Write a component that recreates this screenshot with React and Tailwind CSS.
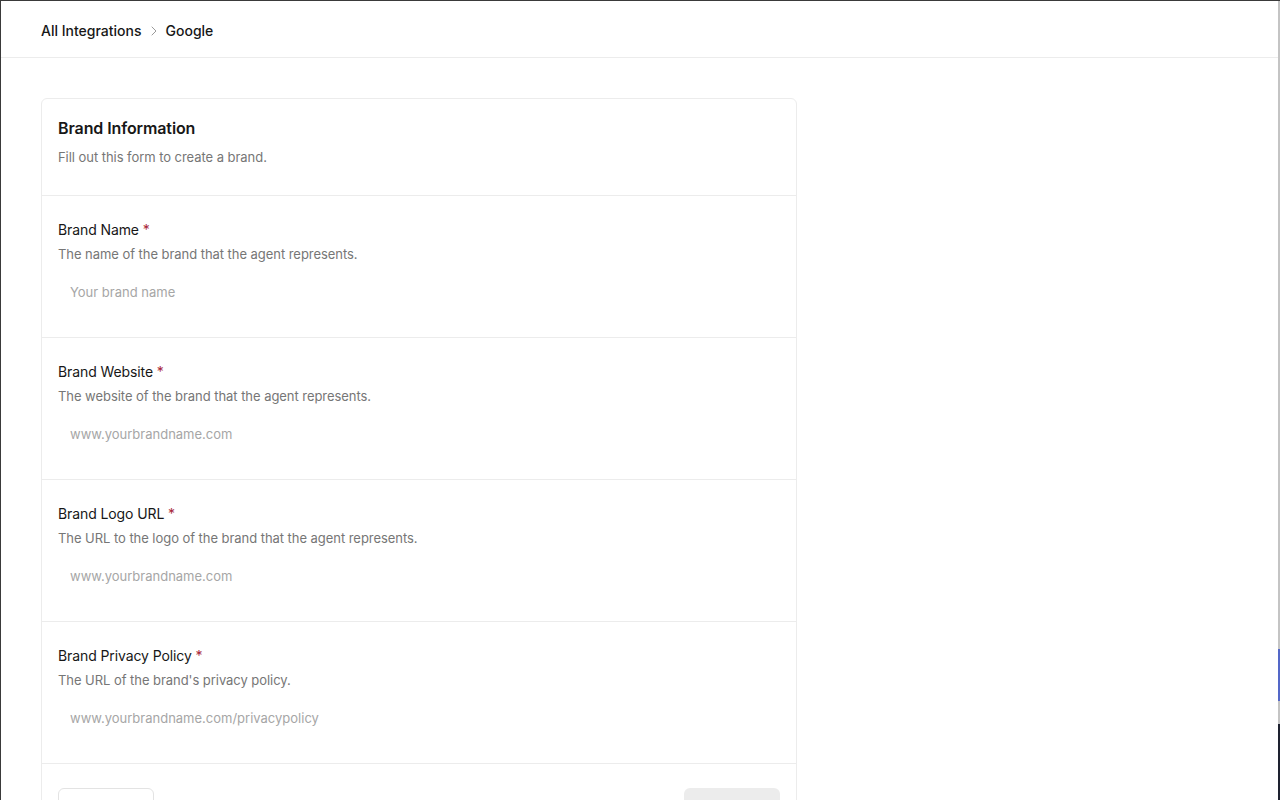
import { ChevronRight } from 'lucide-react';

const fields = [
    { label: 'Brand Name', help: 'The name of the brand that the agent represents.', placeholder: 'Your brand name' },
    { label: 'Brand Website', help: 'The website of the brand that the agent represents.', placeholder: 'www.yourbrandname.com' },
    { label: 'Brand Logo URL', help: 'The URL to the logo of the brand that the agent represents.', placeholder: 'www.yourbrandname.com' },
    { label: 'Brand Privacy Policy', help: "The URL of the brand's privacy policy.", placeholder: 'www.yourbrandname.com/privacypolicy' },
];

const App = () => {
    return (
        <div className="relative h-[800px] overflow-hidden bg-white border-l border-t border-[#3a3a3a] font-['Inter',sans-serif] text-[#171717]">
            {/* window edge artifacts on the right */}
            <div className="absolute right-0 top-0 h-full w-[2px] bg-[#c4c4c4]" />
            <div className="absolute right-0 top-[648px] h-[52px] w-[2px] bg-[#5468c8]" />
            <div className="absolute right-0 top-[723px] h-[77px] w-[2px] bg-[#1e2230]" />

            <header className="h-[57px] border-b border-[#ececec] flex items-center px-10 pt-[3px]">
                <nav className="flex items-center gap-1 text-[14px] font-medium">
                    <span>All Integrations</span>
                    <ChevronRight className="w-4 h-4 text-[#9a9a9a]" strokeWidth={1.5} />
                    <span>Google</span>
                </nav>
            </header>

            <main className="px-10 pt-10">
                <div className="w-[756px] border border-[#ececec] rounded-md">
                    <div className="px-4 pt-[17px] pb-[28px] border-b border-[#ececec]">
                        <h2 className="text-[16px] leading-6 font-semibold tracking-[-0.1px]">Brand Information</h2>
                        <p className="mt-[7px] text-[13px] leading-5 text-[#767676] tracking-[-0.05px]">Fill out this form to create a brand.</p>
                    </div>

                    {fields.map((f) => (
                        <div key={f.label} className="px-4 pt-6 pb-[27px] border-b border-[#ececec]">
                            <label className="block text-[14px] leading-5 tracking-[-0.1px]">
                                {f.label} <span className="text-[#a8283a]">*</span>
                            </label>
                            <p className="mt-1 text-[13px] leading-5 text-[#767676] tracking-[-0.05px]">{f.help}</p>
                            <input
                                type="text"
                                placeholder={f.placeholder}
                                className="mt-2.5 block w-full h-9 px-3 text-[13px] bg-transparent outline-none placeholder:text-[#a6a6a6]"
                            />
                        </div>
                    ))}

                    <div className="px-4 pt-6 pb-6 flex justify-between">
                        <button aria-label="Cancel" className="w-24 h-9 rounded-md border border-[#e3e3e3] bg-white" />
                        <button aria-label="Create" className="w-24 h-9 rounded-md bg-[#ececec]" />
                    </div>
                </div>
            </main>
        </div>
    );
};

export default App;
